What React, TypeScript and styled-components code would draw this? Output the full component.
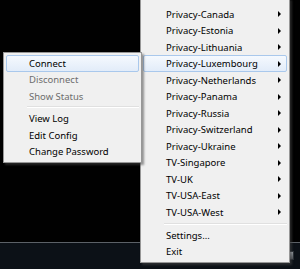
import React from "react";
import styled, { createGlobalStyle } from "styled-components";

// Data
const LEFT_ITEMS: Array<{ label: string; disabled?: boolean; hover?: boolean } | "sep"> = [
  { label: "Connect", hover: true },
  { label: "Disconnect", disabled: true },
  { label: "Show Status", disabled: true },
  "sep",
  { label: "View Log" },
  { label: "Edit Config" },
  { label: "Change Password" },
];

const SERVERS: Array<string> = [
  "Privacy-Canada",
  "Privacy-Estonia",
  "Privacy-Lithuania",
  "Privacy-Luxembourg",
  "Privacy-Netherlands",
  "Privacy-Panama",
  "Privacy-Russia",
  "Privacy-Switzerland",
  "Privacy-Ukraine",
  "TV-Singapore",
  "TV-UK",
  "TV-USA-East",
  "TV-USA-West",
];

const GlobalStyle = createGlobalStyle`
  html, body {
    margin: 0;
    padding: 0;
    background: #000;
  }
  body {
    font-family: "Noto Sans", "Open Sans", sans-serif;
  }
`;

const Desktop = styled.div`
  position: relative;
  width: 300px;
  height: 269px;
  overflow: hidden;
  display: flex;
  flex-direction: column;
  background: #000;
`;

const Screen = styled.div`
  flex: 1;
  background: #010101;
`;

const Taskbar = styled.div`
  height: 27px;
  background: #0c1117;
  border-top: 1px solid #5c6167;
  display: flex;
  justify-content: flex-end;
  align-items: flex-start;
  padding: 8px 6px 0 0;
  box-sizing: border-box;
`;

const TrayIcon = styled.div`
  width: 5px;
  height: 7px;
  background: linear-gradient(#9aa0a6, #4d5258);
  border: 1px solid #2a2f35;
`;

// popup menus float over the desktop
const Menu = styled.div<{ $top: number; $left: number; $width: number; $z: number; $padTop?: number }>`
  position: absolute;
  top: ${(p) => p.$top}px;
  left: ${(p) => p.$left}px;
  width: ${(p) => p.$width}px;
  z-index: ${(p) => p.$z};
  box-sizing: border-box;
  background: #f0f0f0;
  border: 1px solid #979797;
  padding: ${(p) => p.$padTop ?? 2}px 2px 2px;
  box-shadow: 2px 2px 2px rgba(70, 70, 70, 0.55);
  display: flex;
  flex-direction: column;
`;

const Item = styled.div<{ $hover?: boolean; $disabled?: boolean }>`
  position: relative;
  height: 16.5px;
  padding-left: 22px;
  font-size: 9.5px;
  color: ${(p) => (p.$disabled ? "#6d6d6d" : "#000")};
  box-sizing: border-box;
  border-radius: 2px;
  border: 1px solid ${(p) => (p.$hover ? "#a9c8ec" : "transparent")};
  background: ${(p) =>
    p.$hover ? "linear-gradient(#f5f9fe, #e2ecf9)" : "transparent"};
  display: flex;
  align-items: center;
  white-space: nowrap;
`;

const Separator = styled.div<{ $h: number }>`
  height: ${(p) => p.$h}px;
  display: flex;
  align-items: center;
  padding-left: 21px;

  &::after {
    content: "";
    flex: 1;
    height: 1px;
    background: #e0e0e0;
    border-bottom: 1px solid #fff;
  }
`;

const Arrow = styled.span`
  position: absolute;
  right: 5px;
  top: 50%;
  margin-top: -3px;
  width: 0;
  height: 0;
  border-top: 3px solid transparent;
  border-bottom: 3px solid transparent;
  border-left: 3px solid #000;
`;

export default function App() {
  return (
    <>
      <GlobalStyle />
      <Desktop>
        <Screen />
        <Taskbar>
          <TrayIcon />
        </Taskbar>

        <Menu $top={-2} $left={140} $width={150} $z={1} $padTop={6.75}>
          {SERVERS.map((name) => (
            <Item key={name} $hover={name === "Privacy-Luxembourg"}>
              {name}
              <Arrow />
            </Item>
          ))}
          <Separator $h={6.5} />
          <Item>Settings...</Item>
          <Item>Exit</Item>
        </Menu>

        <Menu $top={52} $left={3} $width={139} $z={2}>
          {LEFT_ITEMS.map((it, i) =>
            it === "sep" ? (
              <Separator key={i} $h={5.75} />
            ) : (
              <Item key={i} $hover={it.hover} $disabled={it.disabled}>
                {it.label}
              </Item>
            )
          )}
        </Menu>
      </Desktop>
    </>
  );
}
